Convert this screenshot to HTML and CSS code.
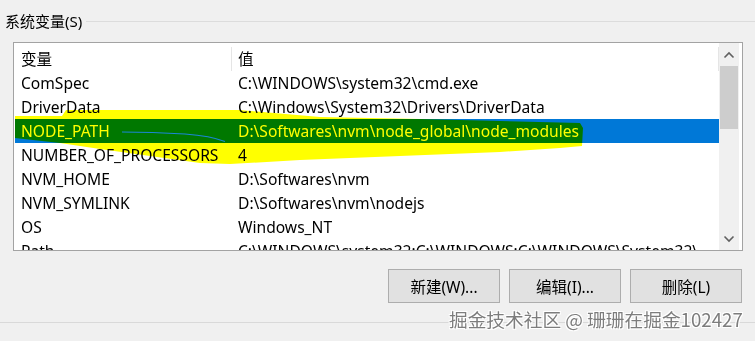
FILE: index.html
```html
<!DOCTYPE html>
<html lang="zh-CN">
<head>
<meta charset="utf-8">
<title>系统变量</title>
<link rel="stylesheet" href="styles.css">
</head>
<body>
<div class="page">
  <div class="group">
    <div class="group-title">
      <span class="group-label">系统变量(S)</span>
      <span class="group-line"></span>
    </div>
    <div class="list">
      <div class="table">
        <div class="head">
          <div class="hcell c1">变量</div>
          <div class="hcell c2">值</div>
        </div>
        <div class="body">
          <div class="row"><div class="cell c1">ComSpec</div><div class="cell c2">C:\WINDOWS\system32\cmd.exe</div></div>
          <div class="row"><div class="cell c1">DriverData</div><div class="cell c2">C:\Windows\System32\Drivers\DriverData</div></div>
          <div class="row sel"><div class="cell c1">NODE_PATH</div><div class="cell c2">D:\Softwares\nvm\node_global\node_modules</div></div>
          <div class="row"><div class="cell c1">NUMBER_OF_PROCESSORS</div><div class="cell c2">4</div></div>
          <div class="row"><div class="cell c1">NVM_HOME</div><div class="cell c2">D:\Softwares\nvm</div></div>
          <div class="row"><div class="cell c1">NVM_SYMLINK</div><div class="cell c2">D:\Softwares\nvm\nodejs</div></div>
          <div class="row"><div class="cell c1">OS</div><div class="cell c2">Windows_NT</div></div>
          <div class="row"><div class="cell c1">Path</div><div class="cell c2">C:\WINDOWS\system32;C:\WINDOWS;C:\WINDOWS\System32\Wbem;C:\WINDOWS\System32\WindowsPowerShell\v1.0\</div></div>
        </div>
      </div>
      <div class="scrollbar">
        <div class="sb-btn">
          <svg width="12" height="8" viewBox="0 0 12 8"><path d="M1.5 6.5 L6 2 L10.5 6.5" fill="none" stroke="#606060" stroke-width="1.6"/></svg>
        </div>
        <div class="sb-track"><div class="sb-thumb"></div></div>
        <div class="sb-btn down">
          <svg width="12" height="8" viewBox="0 0 12 8"><path d="M1.5 1.5 L6 6 L10.5 1.5" fill="none" stroke="#606060" stroke-width="1.6"/></svg>
        </div>
      </div>
    </div>
    <div class="buttons">
      <button class="btn">新建(W)...</button>
      <button class="btn">编辑(I)...</button>
      <button class="btn">删除(L)</button>
    </div>
  </div>

  <svg class="marker" width="755" height="341" viewBox="0 0 755 341">
    <path d="M15 119 L15 116 L62 116 L66 110 L240 110 L320 117 L420 119 L580 123 L583 128 L582 146 L560 148 L500 152 L400 156 L300 160 L230 164 L200 163 L150 156 L100 149 L60 143 L15 138 Z" fill="#ffff00"/>
  </svg>
  <svg class="streak" width="755" height="341" viewBox="0 0 755 341">
    <path d="M122 132 C140 132 160 132.5 185 134 C205 135.5 216 138 225 141.5" fill="none" stroke="#1b86d6" stroke-width="1.2"/>
  </svg>

  <div class="watermark">掘金技术社区 @ 珊珊在掘金102427</div>
</div>
</body>
</html>
```

FILE: styles.css
```css
html, body {
  margin: 0;
  padding: 0;
  background: #f0f0f0;
}

.page {
  position: relative;
  width: 755px;
  height: 341px;
  overflow: hidden;
  font-family: "Noto Sans", "Noto Sans CJK SC", sans-serif;
  font-size: 15.6px;
  color: #000;
}

.group {
  padding-top: 11px;
  padding-bottom: 19px;
  border-bottom: 1px solid #d9d9d9;
}

.group-title {
  display: flex;
  align-items: center;
  height: 20px;
  padding-left: 5px;
}

.group-label {
  line-height: 20px;
  white-space: nowrap;
  font-size: 15px;
}

.group-line {
  flex: 1;
  height: 0;
  border-top: 1px solid #dcdcdc;
  margin-left: 4px;
  margin-top: 1px;
}

.list {
  margin: 11px 0 0 13px;
  width: 728px;
  height: 207px;
  border: 1px solid #a3a3a3;
  background: #fff;
  display: flex;
  overflow: hidden;
}

.table {
  flex: none;
  width: 704px;
  margin-left: 1px;
  display: flex;
  flex-direction: column;
  overflow: hidden;
}

.head {
  display: flex;
  height: 28px;
  flex: none;
}

.hcell {
  position: relative;
  box-sizing: border-box;
  padding: 6px 0 0 6px;
  line-height: 20px;
}

.hcell::after {
  content: "";
  position: absolute;
  right: 0;
  top: 4px;
  bottom: 0;
  width: 1px;
  background: #e5e5e5;
}

.c1 {
  width: 217px;
  flex: none;
}

.c2 {
  flex: 1;
  min-width: 0;
}

.body {
  flex: 1;
  overflow: hidden;
}

.row {
  display: flex;
  height: 24px;
}

.cell {
  box-sizing: border-box;
  padding-left: 6px;
  line-height: 24px;
  white-space: nowrap;
  overflow: hidden;
  text-overflow: ellipsis;
}

.row.sel {
  background: #0078d7;
  color: #fff;
}

.scrollbar {
  flex: none;
  width: 20px;
  display: flex;
  flex-direction: column;
  background: #f0f0f0;
}

.sb-btn {
  height: 23px;
  display: flex;
  align-items: center;
  justify-content: center;
  flex: none;
}

.sb-btn.down {
  height: 22px;
}

.sb-track {
  flex: 1;
  padding: 0 1px;
}

.sb-thumb {
  height: 63px;
  background: #cdcdcd;
}

.buttons {
  display: flex;
  justify-content: flex-end;
  gap: 9px;
  margin-top: 18px;
  padding-right: 13px;
}

.btn {
  width: 112px;
  height: 34px;
  box-sizing: border-box;
  border: 1px solid #adadad;
  background: #e1e1e1;
  font-family: "Noto Sans", "Noto Sans CJK SC", sans-serif;
  font-size: 15.5px;
  color: #000;
  padding: 0;
}

.marker {
  position: absolute;
  left: 0;
  top: 0;
  mix-blend-mode: multiply;
  pointer-events: none;
}

.streak {
  position: absolute;
  left: 0;
  top: 0;
  pointer-events: none;
}

.watermark {
  position: absolute;
  left: 449px;
  top: 309px;
  font-family: "Noto Sans CJK SC", sans-serif;
  font-size: 18.7px;
  line-height: 19px;
  color: #7d7d7d;
  white-space: nowrap;
  text-shadow: 1px 1px 0 #fff, -1px -1px 0 #fff, 1px -1px 0 #fff, -1px 1px 0 #fff;
}
```
